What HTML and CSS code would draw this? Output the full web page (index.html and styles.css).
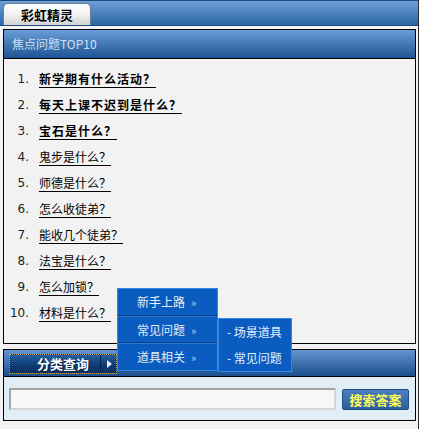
FILE: index.html
```html
<!DOCTYPE html>
<html lang="zh">
<head>
<meta charset="utf-8">
<link rel="stylesheet" href="styles.css">
</head>
<body>
<div class="page">
  <div class="topbar"><div class="tab">彩虹精灵</div></div>
  <div class="box top10">
    <div class="box-head">焦点问题TOP10</div>
    <ul class="list">
      <li class="bold"><span class="num">1.</span><a>新学期有什么活动？</a></li>
      <li class="bold"><span class="num">2.</span><a>每天上课不迟到是什么？</a></li>
      <li class="bold"><span class="num">3.</span><a>宝石是什么？</a></li>
      <li><span class="num">4.</span><a>鬼步是什么？</a></li>
      <li><span class="num">5.</span><a>师德是什么？</a></li>
      <li><span class="num">6.</span><a>怎么收徒弟？</a></li>
      <li><span class="num">7.</span><a>能收几个徒弟？</a></li>
      <li><span class="num">8.</span><a>法宝是什么？</a></li>
      <li><span class="num">9.</span><a>怎么加锁？</a></li>
      <li><span class="num">10.</span><a>材料是什么？</a></li>
    </ul>
  </div>
  <div class="box search">
    <div class="search-head">
      <div class="cat-btn"><span class="cat-label">分类查询</span><span class="cat-arrow"></span></div>
    </div>
    <div class="search-body">
      <input class="q" type="text">
      <button class="go">搜索答案</button>
    </div>
  </div>
  <div class="menu">
    <div class="mi">新手上路<span class="raquo">»</span></div>
    <div class="mi">常见问题<span class="raquo">»</span></div>
    <div class="mi">道具相关<span class="raquo">»</span></div>
  </div>
  <div class="submenu">
    <div class="si">- 场景道具</div>
    <div class="si">- 常见问题</div>
  </div>
</div>
</body>
</html>
```
FILE: styles.css
```css
html, body { margin: 0; padding: 0; background: #fff; }
body { font-family: "Noto Sans CJK SC", "DejaVu Sans", sans-serif; font-size: 12px; }
.page {
  position: relative;
  width: 418px;
  height: 429px;
  border-right: 1px solid #2a2a2a;
  background: #f2f2f2;
}
.topbar {
  height: 24px;
  border-top: 1px solid #1d4a7e;
  border-bottom: 1px solid #1d4a7e;
  background: linear-gradient(#6fa0d6, #2b66a6);
  padding-left: 3px;
  display: flex;
  align-items: flex-end;
}
.tab {
  width: 86px;
  height: 21px;
  border: 1px solid #6d7d90;
  border-bottom: none;
  border-radius: 5px 5px 0 0;
  background: linear-gradient(#ffffff, #f2f2f2 50%, #d2d2d2);
  font-weight: bold;
  font-size: 13px;
  color: #000;
  text-align: center;
  line-height: 21px;
}
.box {
  margin: 3px 0 0 3px;
  width: 411px;
  border: 1px solid #000;
}
.box-head {
  height: 28px;
  border-bottom: 1px solid #000;
  background: linear-gradient(#6a9dd6, #1e5494);
  color: #cfe0f5;
  line-height: 28px;
  padding-left: 8px;
  font-size: 12px;
}
.list {
  list-style: none;
  margin: 0;
  padding: 7px 0 17px 0;
  height: 260px;
}
.list li {
  height: 26px;
  line-height: 26px;
  display: flex;
  align-items: center;
}
.num {
  width: 25px;
  text-align: right;
  margin-right: 10px;
  font-family: "DejaVu Sans", sans-serif;
  font-size: 12px;
  color: #222;
}
.list a {
  color: #000;
  text-decoration: underline;
  text-underline-offset: 3px;
  line-height: 16px;
}
.list li.bold a { font-weight: bold; letter-spacing: 1px; }
.search { margin-top: 5px; }
.search-head {
  height: 27px;
  border-bottom: 1px solid #000;
  background: linear-gradient(#6395d0, #1c4f8d);
  padding: 4px 0 0 5px;
  box-sizing: border-box;
}
.cat-btn {
  width: 106px;
  height: 18px;
  border: 1px dotted #c79b52;
  background: linear-gradient(#24609f, #0e3a70 60%, #0a3262);
  display: flex;
  align-items: center;
}
.cat-label {
  width: 91px;
  height: 18px;
  border-right: 1px solid #072447;
  text-align: center;
  padding-left: 16px;
  box-sizing: border-box;
  color: #fff;
  font-weight: bold;
  font-size: 13px;
  line-height: 18px;
  text-shadow: 1px 1px 0 #06203f;
}
.cat-arrow {
  width: 0; height: 0;
  margin-left: 6px;
  border-left: 5px solid #e6f0ff;
  border-top: 4px solid transparent;
  border-bottom: 4px solid transparent;
}
.search-body {
  height: 43px;
  background: #e2eef5;
  padding: 11px 0 0 5px;
  box-sizing: border-box;
  display: flex;
  align-items: flex-start;
}
.q {
  width: 327px;
  height: 22px;
  box-sizing: border-box;
  margin: 0;
  border-top: 2px solid #a2a2a2;
  border-left: 2px solid #a2a2a2;
  border-bottom: 2px solid #d4d4d4;
  border-right: 2px solid #d4d4d4;
  background: #f7f7f7;
  padding: 0;
}
.go {
  margin: 1px 0 0 6px;
  width: 67px;
  height: 21px;
  padding: 0;
  border: 1px solid #1f4d85;
  border-radius: 2px;
  background: linear-gradient(#4b80bd, #2c5f9d);
  color: #ffff55;
  font-family: "Noto Sans CJK SC", sans-serif;
  font-weight: bold;
  font-size: 13px;
  line-height: 19px;
}
.menu {
  position: absolute;
  left: 117px;
  top: 288px;
  width: 101px;
  border: 1px solid #3388e6;
  box-sizing: border-box;
  background: #0a5cc0;
}
.mi {
  height: 27px;
  line-height: 26px;
  color: #e4eefa;
  padding-left: 19px;
  border-bottom: 1px solid #083b80;
  box-sizing: border-box;
}
.mi + .mi { border-top: 1px solid #2a7ad8; }
.mi:last-child { border-bottom: none; }
.raquo { font-size: 11px; margin-left: 6px; color: #b7d3f3; }
.submenu {
  position: absolute;
  left: 218px;
  top: 318px;
  width: 74px;
  border: 1px solid #3388e6;
  box-sizing: border-box;
  background: #0a5cc0;
  padding: 0;
}
.si {
  height: 26px;
  line-height: 26px;
  color: #e4eefa;
  padding-left: 8px;
}
```
